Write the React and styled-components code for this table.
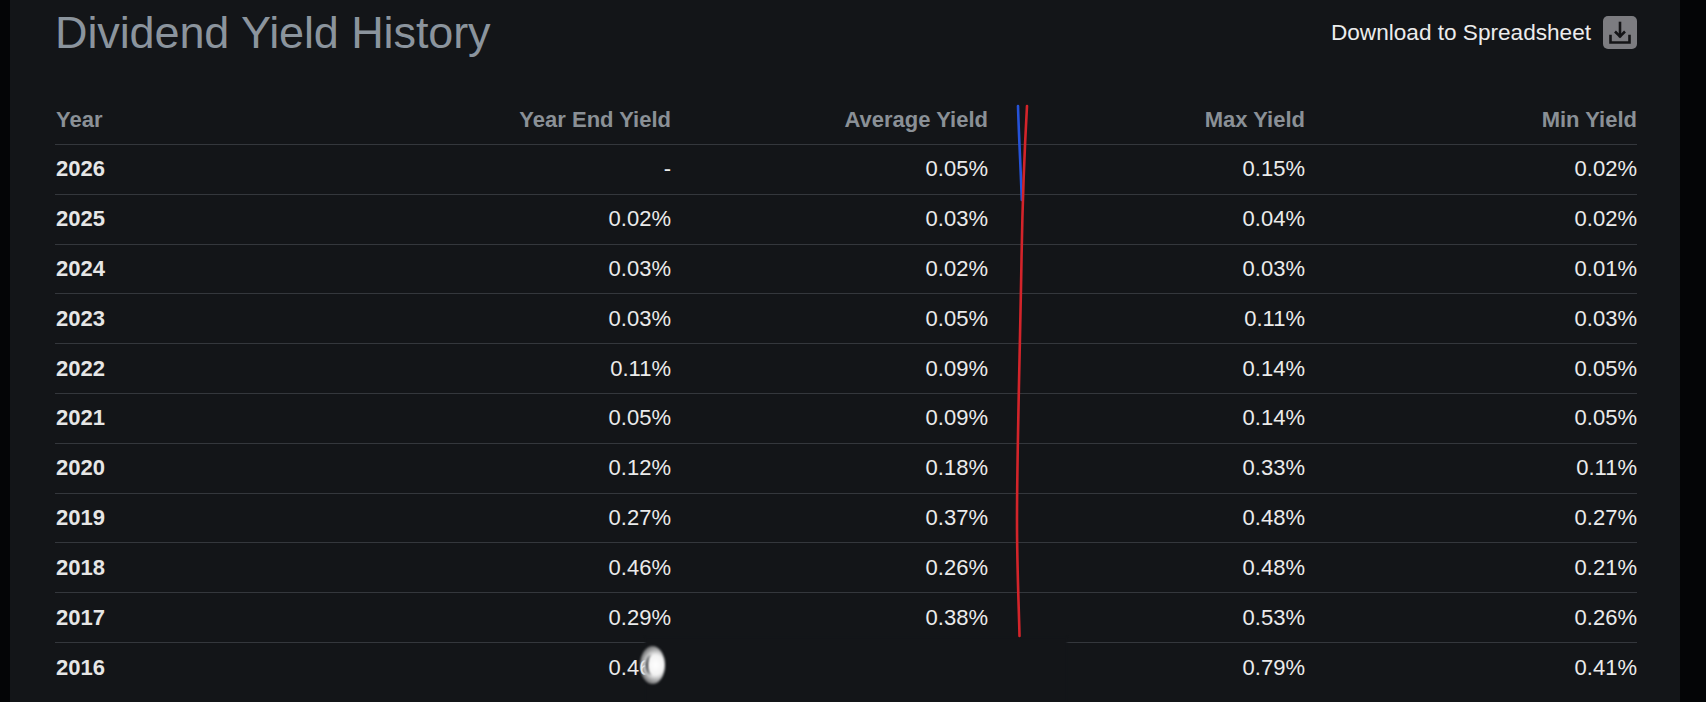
import React from "react";
import styled, { createGlobalStyle } from "styled-components";

const Global = createGlobalStyle`
  html, body { margin: 0; padding: 0; background: #040506; }
  body { font-family: "Liberation Sans", Arial, sans-serif; }
`;

const Page = styled.div`
  position: relative;
  width: 1706px;
  height: 702px;
  overflow: hidden;
  background: #040506;
`;

const Panel = styled.section`
  margin-left: 10px;
  width: 1670px;
  height: 702px;
  box-sizing: border-box;
  padding: 10px 43px 0 45px;
  background: #131518;
`;

const TopBar = styled.div`
  display: flex;
  align-items: center;
  justify-content: space-between;
  height: 45px;
  margin-bottom: 40px;
`;

const Title = styled.h2`
  margin: 0;
  font-size: 45px;
  line-height: 1;
  font-weight: 400;
  color: #8b949d;
  letter-spacing: -0.1px;
`;

const Download = styled.a`
  display: flex;
  align-items: center;
  gap: 12px;
  font-size: 22.6px;
  color: #ececec;
  text-decoration: none;
`;

const IconBox = styled.span`
  display: flex;
  align-items: center;
  justify-content: center;
  width: 34px;
  height: 33px;
  border-radius: 5px;
  background: #7c7c80;
`;

const Table = styled.div`
  width: 1582px;
`;

const Row = styled.div`
  display: grid;
  grid-template-columns: 299px 317px 317px 317px 1fr;
  align-items: center;
  box-sizing: border-box;
  height: ${(p) => (p.$head ? "50px" : "49.8px")};
  border-bottom: ${(p) => (p.$last ? "none" : "1px solid #34373c")};
  font-size: 22px;
`;

const Cell = styled.div`
  text-align: ${(p) => (p.$left ? "left" : "right")};
  padding-left: ${(p) => (p.$left ? "1px" : "0")};
  font-weight: ${(p) => (p.$bold ? 700 : 400)};
  color: ${(p) => (p.$head ? "#8a9096" : p.$bold ? "#e6e6e6" : "#ebebeb")};
  white-space: nowrap;
`;

const Overlay = styled.svg`
  position: absolute;
  left: 0;
  top: 0;
  pointer-events: none;
`;

const Smudge = styled.div`
  position: absolute;
  left: 645px;
  top: 637px;
  width: 422px;
  height: 65px;
  background: #131518;
  filter: blur(1px);
`;

const Blob = styled.div`
  position: absolute;
  left: 640px;
  top: 646px;
  width: 25px;
  height: 38px;
  border-radius: 50%;
  filter: blur(1.2px);
  background: radial-gradient(ellipse at 62% 50%, #ffffff 0%, #f2f2f2 38%, rgba(220,220,220,0.55) 68%, rgba(19,21,24,0) 100%);
  &::after {
    content: "";
    position: absolute;
    left: 6px;
    top: 9px;
    width: 11px;
    height: 20px;
    border-radius: 50%;
    border-left: 2.5px solid #23262b;
    box-sizing: border-box;
  }
`;

const header = ["Year", "Year End Yield", "Average Yield", "Max Yield", "Min Yield"];

const data = [
  ["2026", "-", "0.05%", "0.15%", "0.02%"],
  ["2025", "0.02%", "0.03%", "0.04%", "0.02%"],
  ["2024", "0.03%", "0.02%", "0.03%", "0.01%"],
  ["2023", "0.03%", "0.05%", "0.11%", "0.03%"],
  ["2022", "0.11%", "0.09%", "0.14%", "0.05%"],
  ["2021", "0.05%", "0.09%", "0.14%", "0.05%"],
  ["2020", "0.12%", "0.18%", "0.33%", "0.11%"],
  ["2019", "0.27%", "0.37%", "0.48%", "0.27%"],
  ["2018", "0.46%", "0.26%", "0.48%", "0.21%"],
  ["2017", "0.29%", "0.38%", "0.53%", "0.26%"],
  ["2016", "0.46%", "0.41%", "0.79%", "0.41%"],
];

function DownloadIcon() {
  return (
    <svg width="34" height="33" viewBox="0 0 34 33" fill="none" stroke="#141416" strokeWidth="2.6" strokeLinecap="square">
      <path d="M17 7 V20" />
      <path d="M12 15.5 L17 20.5 L22 15.5" strokeLinecap="butt" strokeLinejoin="miter" />
      <path d="M7.5 20 V26.5 H26.5 V20" strokeLinejoin="miter" />
    </svg>
  );
}

export default function App() {
  return (
    <Page>
      <Global />
      <Panel>
        <TopBar>
          <Title>Dividend Yield History</Title>
          <Download href="#">
            Download to Spreadsheet
            <IconBox>
              <DownloadIcon />
            </IconBox>
          </Download>
        </TopBar>
        <Table>
          <Row $head>
            {header.map((h, i) => (
              <Cell key={h} $head $bold $left={i === 0}>
                {h}
              </Cell>
            ))}
          </Row>
          {data.map((r, ri) => (
            <Row key={r[0]} $last={ri === data.length - 1}>
              {r.map((v, i) => (
                <Cell key={i} $bold={i === 0} $left={i === 0}>
                  {v}
                </Cell>
              ))}
            </Row>
          ))}
        </Table>
      </Panel>
      <Smudge />
      <Blob />
      <Overlay width="1706" height="702" viewBox="0 0 1706 702">
        <path
          d="M1018 106 C1019 140 1020.8 170 1021.8 200"
          stroke="#2552d8"
          strokeWidth="2.6"
          fill="none"
          strokeLinecap="round"
        />
        <path
          d="M1027 106 C1024.5 150 1022.5 200 1021.5 260 C1020 350 1017 450 1017 520 C1017 570 1019 610 1019.5 636"
          stroke="#d3242a"
          strokeWidth="2.6"
          fill="none"
          strokeLinecap="round"
        />
      </Overlay>
    </Page>
  );
}
